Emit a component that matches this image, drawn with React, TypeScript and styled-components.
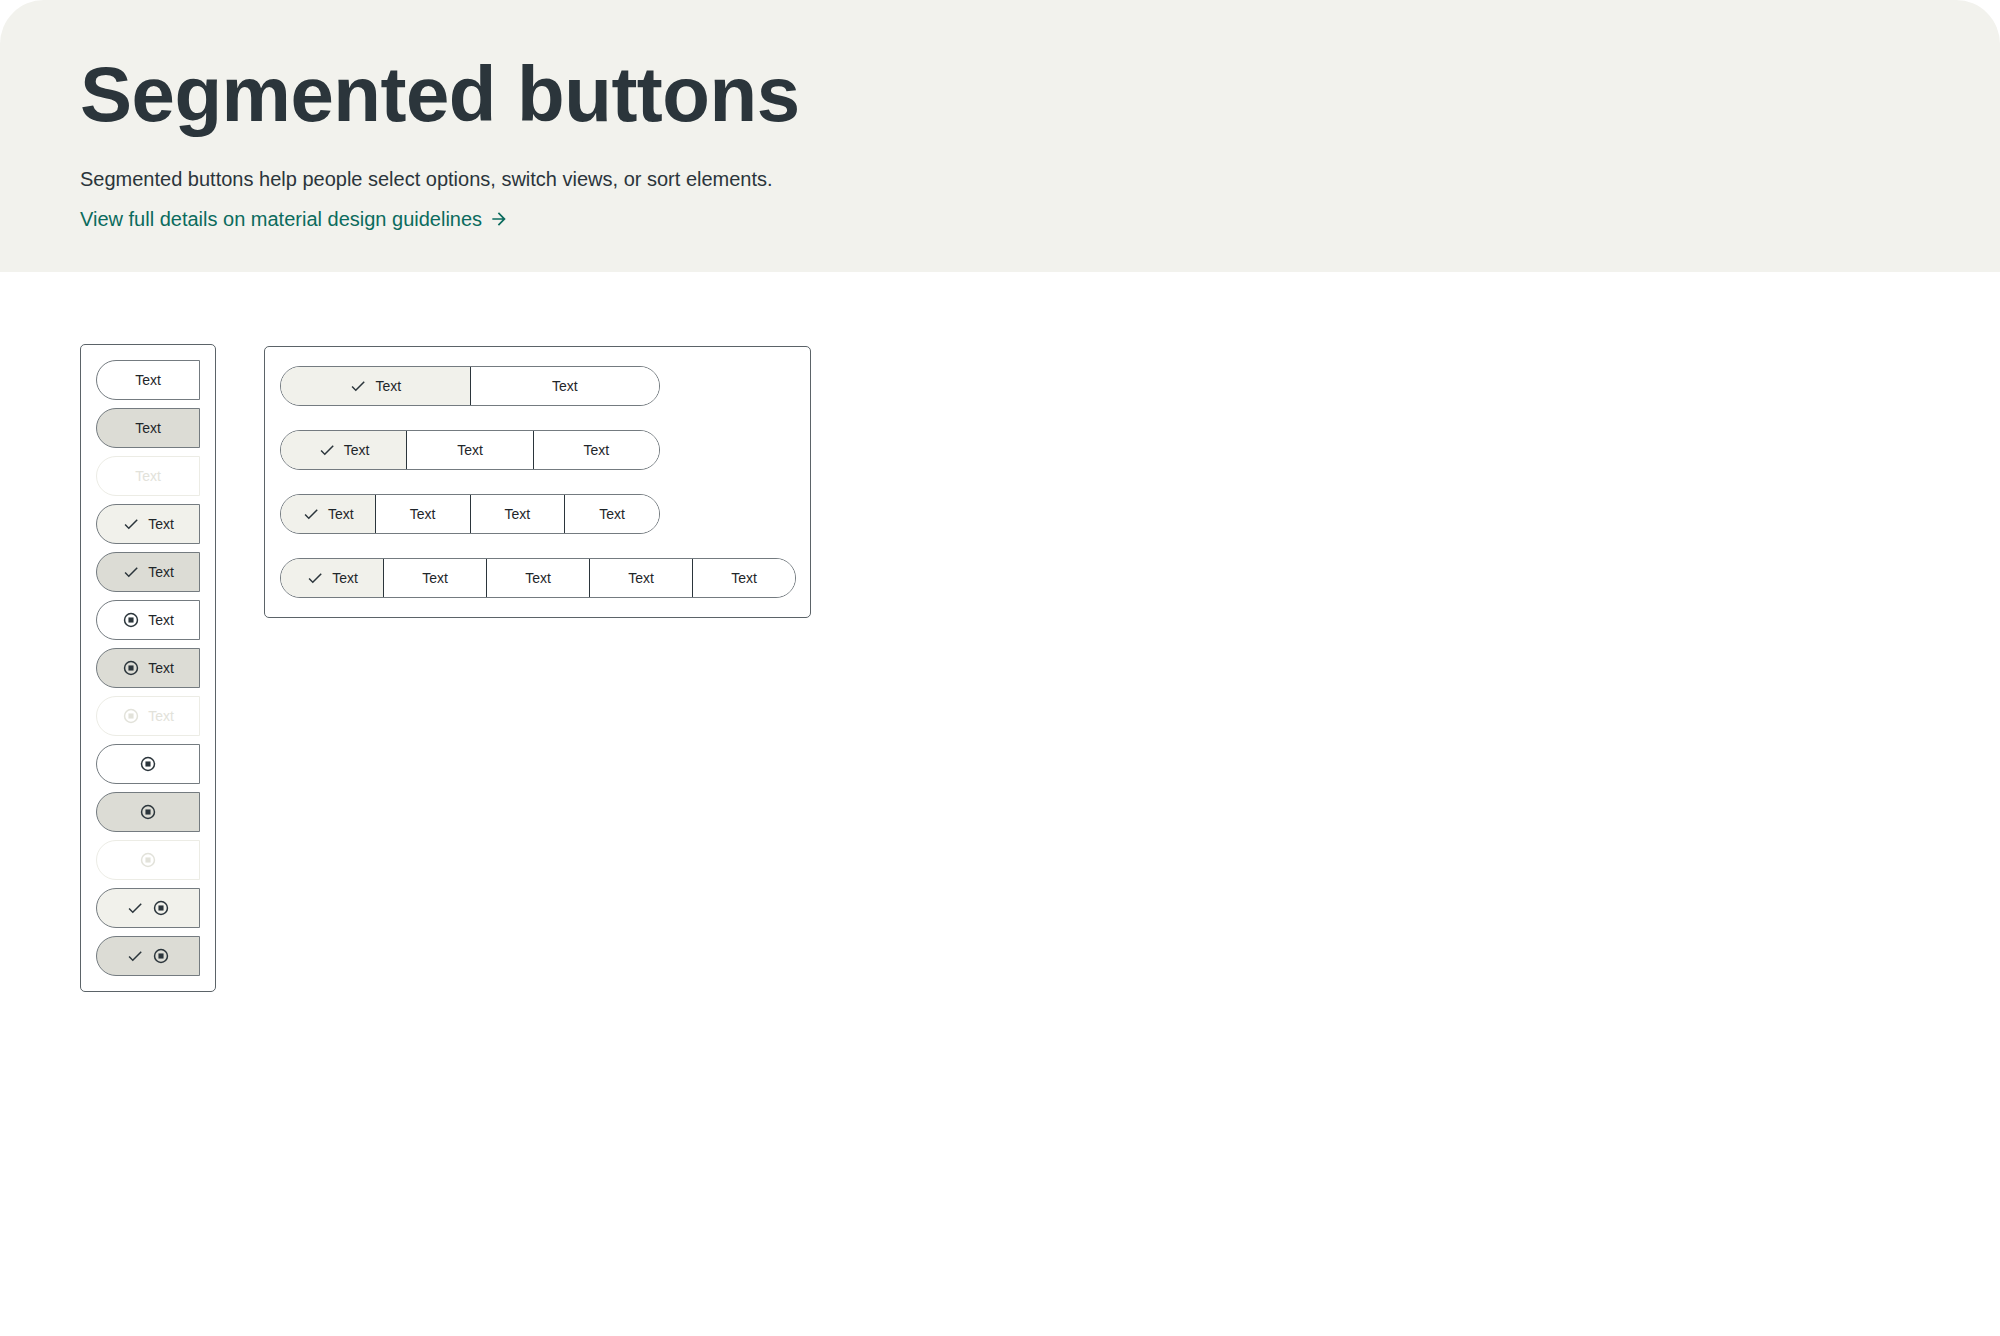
import styled, { createGlobalStyle } from 'styled-components';

const INK = '#2b353b';
const OUTLINE = '#747b80';

const GlobalStyle = createGlobalStyle`
  * { box-sizing: border-box; }
  body {
    margin: 0;
    background: #ffffff;
    font-family: 'Liberation Sans', Arial, sans-serif;
    color: ${INK};
  }
`;

type Tone = 'plain' | 'hover' | 'disabled' | 'selected' | 'selectedHover';

const fills: Record<Tone, string> = {
  plain: '#ffffff',
  hover: '#dcdcd5',
  disabled: '#ffffff',
  selected: '#f1f1eb',
  selectedHover: '#dcdcd5',
};

const CheckIcon = ({ color = INK }: { color?: string }) => (
  <svg width="18" height="18" viewBox="0 0 24 24">
    <path d="M9 16.2 4.8 12l-1.4 1.4L9 19 21 7l-1.4-1.4z" fill={color} />
  </svg>
);

const StopCircleIcon = ({ color = INK }: { color?: string }) => (
  <svg width="18" height="18" viewBox="0 0 24 24">
    <circle cx="12" cy="12" r="8.6" fill="none" stroke={color} strokeWidth="2" />
    <rect x="8.6" y="8.6" width="6.8" height="6.8" fill={color} />
  </svg>
);

const App = () => {
  const singles: { tone: Tone; check?: boolean; icon?: boolean; label?: boolean }[] = [
    { tone: 'plain', label: true },
    { tone: 'hover', label: true },
    { tone: 'disabled', label: true },
    { tone: 'selected', check: true, label: true },
    { tone: 'selectedHover', check: true, label: true },
    { tone: 'plain', icon: true, label: true },
    { tone: 'hover', icon: true, label: true },
    { tone: 'disabled', icon: true, label: true },
    { tone: 'plain', icon: true },
    { tone: 'hover', icon: true },
    { tone: 'disabled', icon: true },
    { tone: 'selected', check: true, icon: true },
    { tone: 'selectedHover', check: true, icon: true },
  ];

  const groups = [
    { count: 2, width: 380, dark: false },
    { count: 3, width: 380, dark: false },
    { count: 4, width: 380, dark: false },
    { count: 5, width: 516, dark: true },
  ];

  return (
    <>
      <GlobalStyle />
      <Header>
        <Title>Segmented buttons</Title>
        <Lead>Segmented buttons help people select options, switch views, or sort elements.</Lead>
        <GuideLink href="#">
          View full details on material design guidelines
          <svg width="20" height="20" viewBox="0 0 24 24">
            <path d="M12 4l-1.41 1.41L16.17 11H4v2h12.17l-5.58 5.59L12 20l8-8z" fill="#0b6b5d" />
          </svg>
        </GuideLink>
      </Header>

      <Demo>
        <Panel>
          <SingleList>
            {singles.map((s, i) => {
              const faded = s.tone === 'disabled';
              const color = faded ? '#e2e2da' : INK;
              return (
                <SingleButton key={i} $tone={s.tone}>
                  {s.check && <CheckIcon color={color} />}
                  {s.icon && <StopCircleIcon color={color} />}
                  {s.label && <Label $faded={faded}>Text</Label>}
                </SingleButton>
              );
            })}
          </SingleList>
        </Panel>

        <Panel $offset>
          <GroupList>
            {groups.map((g, i) => (
              <Group key={i} $width={g.width}>
                {Array.from({ length: g.count }).map((_, j) => (
                  <Segment key={j} $selected={j === 0} $dark={g.dark}>
                    {j === 0 && <CheckIcon />}
                    <Label>Text</Label>
                  </Segment>
                ))}
              </Group>
            ))}
          </GroupList>
        </Panel>
      </Demo>
    </>
  );
};

export default App;

const Header = styled.header`
  height: 272px;
  background: #f2f2ed;
  border-radius: 44px 44px 0 0;
  padding: 47px 80px 0;
  display: flex;
  flex-direction: column;
`;

const Title = styled.h1`
  margin: 0;
  font-size: 78px;
  line-height: 94px;
  font-weight: 700;
  letter-spacing: -0.5px;
  color: ${INK};
`;

const Lead = styled.p`
  margin: 24px 0 0;
  font-size: 20px;
  line-height: 28px;
  color: ${INK};
`;

const GuideLink = styled.a`
  margin-top: 12px;
  display: inline-flex;
  align-items: center;
  gap: 7px;
  font-size: 20px;
  line-height: 28px;
  color: #0b6b5d;
  text-decoration: none;
  align-self: flex-start;
`;

const Demo = styled.main`
  display: flex;
  align-items: flex-start;
  gap: 48px;
  padding: 72px 80px 0;
`;

const Panel = styled.section<{ $offset?: boolean }>`
  margin-top: ${(p) => (p.$offset ? '2px' : '0')};
  border: 1px solid #5b6368;
  border-radius: 5px;
  background: #ffffff;
`;

const SingleList = styled.div`
  width: 134px;
  padding: 15px 15px 15px;
  display: flex;
  flex-direction: column;
  gap: 8px;
`;

const SingleButton = styled.div<{ $tone: Tone }>`
  width: 104px;
  height: 40px;
  display: flex;
  align-items: center;
  justify-content: center;
  gap: 8px;
  background: ${(p) => fills[p.$tone]};
  border: 1px solid ${(p) => (p.$tone === 'disabled' ? '#ecece5' : OUTLINE)};
  border-radius: 20px 0 0 20px;
`;

const Label = styled.span<{ $faded?: boolean }>`
  font-size: 14px;
  color: ${(p) => (p.$faded ? '#e2e2da' : '#1f262a')};
`;

const GroupList = styled.div`
  padding: 19px 15px 19px;
  width: 545px;
  display: flex;
  flex-direction: column;
  gap: 24px;
`;

const Group = styled.div<{ $width: number }>`
  width: ${(p) => p.$width}px;
  height: 40px;
  display: flex;
  border: 1px solid ${OUTLINE};
  border-radius: 20px;
  overflow: hidden;
`;

const Segment = styled.div<{ $selected: boolean; $dark: boolean }>`
  flex: 1;
  display: flex;
  align-items: center;
  justify-content: center;
  gap: 8px;
  background: ${(p) => (p.$selected ? '#f1f1eb' : '#ffffff')};
  & + & {
    border-left: 1px solid ${(p) => (p.$dark ? '#2b353b' : OUTLINE)};
  }
`;
